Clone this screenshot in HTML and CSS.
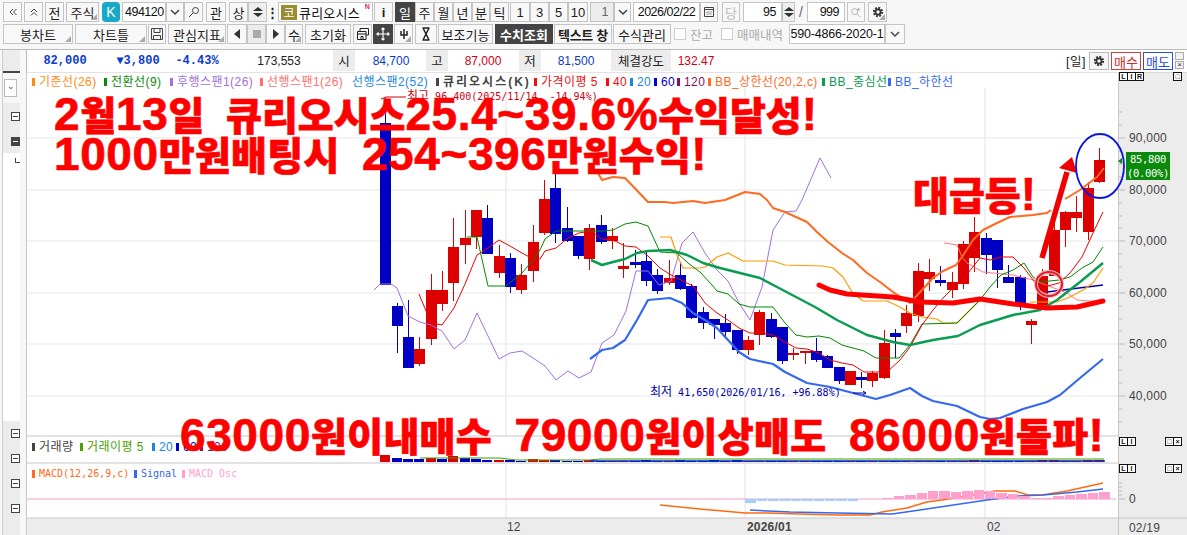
FILE: index.html
```html
<!DOCTYPE html>
<html lang="ko">
<head>
<meta charset="utf-8">
<title>큐리오시스 차트</title>
<link rel="stylesheet" href="styles.css">
</head>
<body>
<div class="top">
  <div class="row r1">
    <button class="b w19"><svg class="ic" viewBox="0 0 12 12"><path class="st thin" d="M6 3L3 6l3 3M9.500 3l-3 3 3 3"/></svg></button>
    <button class="b w19 ml2"><svg class="ic" viewBox="0 0 12 12"><path class="st thin" d="M3 6l3-3 3 3M3 9.500l3-3 3 3"/></svg></button>
    <button class="b w19 ml2">전</button>
    <button class="b w33 ml2 tri">주식</button>
    <span class="klogo">K</span>
    <span class="field w44 ml2">494120</span>
    <button class="b w18"><svg class="ic" viewBox="0 0 12 12"><path class="st" d="M2 4l4 4 4-4"/></svg></button>
    <button class="b w19"><svg class="ic" viewBox="0 0 12 12"><circle class="st thin" cx="7.500" cy="4.500" r="3"/><path class="st thin" d="M5 7l-4 4"/></svg></button>
    <button class="b w20 ml3">관</button>
    <button class="b w19 ml3">상</button>
    <button class="b w19 spin"><i class="up"></i><i class="dn"></i></button>
    <span class="dots w10">⋮</span>
    <span class="field name"><span class="olive">코</span>큐리오시스<em>N</em></span>
    <button class="b w19 ml1 strong">i</button>
    <button class="b w20 ml2 dark">일</button>
    <button class="b w19">주</button>
    <button class="b w19">월</button>
    <button class="b w19">년</button>
    <button class="b w18">분</button>
    <button class="b w19">틱</button>
    <button class="b w20 ml1">1</button>
    <button class="b w19">3</button>
    <button class="b w19">5</button>
    <button class="b w20">10</button>
    <span class="field w24 ml2 grey right">1</span>
    <button class="b w17"><svg class="ic" viewBox="0 0 12 12"><path class="st" d="M2 4l4 4 4-4"/></svg></button>
    <span class="field w67 ml2 ctr">2026/02/22</span>
    <button class="b w18"><svg class="ic" viewBox="0 0 12 12"><path class="st thin" d="M1.500 1.500h9v9h-9zM1.500 3.500h9M3.500 6h1M5.500 6h1M7.500 6h1M3.500 8h1M5.500 8h1M7.500 8h1"/></svg></button>
    <button class="b w18 ml4 off">당</button>
    <span class="field w39 ml3 right">95</span>
    <button class="b w13 spin"><i class="up"></i><i class="dn"></i></button>
    <span class="slash">/</span>
    <span class="field w38 right">999</span>
    <button class="b w18 ml2"><svg class="ic" viewBox="0 0 14 14"><circle class="st thin gr" cx="5.500" cy="6.500" r="3.500"/><path class="st thin gr" d="M8 9l4 4M10 2v4M8 4h4"/></svg></button>
    <button class="b w19 ml3 tri"><svg class="ic" viewBox="0 0 14 14"><circle class="gear" cx="7" cy="7" r="4.500"/><circle class="gearb" cx="7" cy="7" r="3"/></svg></button>
  </div>
  <div class="row r2">
    <button class="b w70 tri">봉차트</button>
    <button class="b w72 ml2 tri">차트틀</button>
    <button class="b w18 ml1"><svg class="ic big" viewBox="0 0 14 14"><path class="st thin" d="M1.500 1.500h11v11h-11zM4 1.500v4h6v-4M3.500 12.500v-4h7v4"/></svg></button>
    <button class="b w58 ml2 tri">관심지표</button>
    <button class="b w20 ml1"><i class="tl"></i></button>
    <button class="b w19 grey"><i class="sq"></i></button>
    <button class="b w19"><i class="tr"></i></button>
    <button class="b w18 tri">수</button>
    <button class="b w46 ml2">초기화</button>
    <button class="b w19 ml2"><svg class="ic big" viewBox="0 0 14 14"><path class="st thin dk" d="M4 4V1.500h8.500V8H10M1.500 4.500h8.500v8H1.500zM1.500 7h8.500M5 9.500h2v3H5z"/></svg></button>
    <button class="b w20 ml1 dark"><svg class="ic big" viewBox="0 0 14 14"><path class="st wh" d="M7 1v12M1 7h12M5.500 2.500L7 1l1.500 1.500M5.500 11.500L7 13l1.500-1.500M2.500 5.500L1 7l1.500 1.500M11.500 5.500L13 7l-1.500 1.500"/></svg></button>
    <button class="b w19 ml1 tri"><svg class="ic" viewBox="0 0 12 12"><path class="st dk" d="M6 1v10M3 3v4h6V3"/></svg></button>
    <button class="b w22 ml2"><svg class="ic big" viewBox="0 0 14 14"><path class="st dk" d="M4 1l6 12M10 1L4 13M3.500 1h7M3.500 13h7"/></svg></button>
    <button class="b w55 ml1">보조기능</button>
    <button class="b w58 ml2 dark strong">수치조회</button>
    <button class="b w58 ml1 strongish">텍스트 창</button>
    <button class="b w58 ml1">수식관리</button>
    <span class="chk ml3"></span><span class="lbl w33">잔고</span>
    <span class="chk ml2"></span><span class="lbl w52">매매내역</span>
    <span class="field w96 ctr acct">590-4866-2020-1</span>
    <button class="b w20"><svg class="ic" viewBox="0 0 12 12"><path class="st" d="M2 4l4 4 4-4"/></svg></button>
  </div>
</div>

<div class="main">
  <aside class="side">
    <div class="stab"></div>
    <div class="sbox">⌄</div>
    <div class="sgroup"><span class="pm"></span><span class="pm on"></span></div>
    <div class="swhite"><span class="ell"></span></div>
    <div class="sgroup lower"><span class="pm"></span><span class="pm"></span><span class="pm"></span><span class="pm"></span></div>
  </aside>

  <section class="chart">
    <div class="info">
      <span class="i c1 nb">82,000</span>
      <span class="i c2 nb">▼3,800</span>
      <span class="i c3 nb">-4.43%</span>
      <span class="i c4">173,553</span>
      <span class="i c5 tag">시</span>
      <span class="i c6 bl">84,700</span>
      <span class="i c5b tag">고</span>
      <span class="i c6 rd">87,000</span>
      <span class="i c5c tag">저</span>
      <span class="i c6 bl">81,500</span>
      <span class="i c7 tag">체결강도</span>
      <span class="i c8 rd">132.47</span>
      <span class="i c9">[일]</span>
      <span class="gearbtn"><svg class="ic" viewBox="0 0 14 14"><circle class="gear" cx="7" cy="7" r="4.500"/><circle class="gearb" cx="7" cy="7" r="3"/></svg></span>
      <span class="buy">매수</span>
      <span class="sell">매도</span>
      <span class="mini"><i></i><i>×</i></span>
    </div>

    <svg id="plot" class="plot" viewBox="26 72 1161 463" width="1161" height="463">
      <rect class="axisbg" x="1119" y="72" width="68" height="463"/>
      <rect class="axisbg" x="26" y="518" width="1161" height="17"/>
      <path class="grid" d="M27 138H1118M27 190H1118M27 241H1118M27 293H1118M27 344H1118M27 396H1118M506 88V436M745 88V436M985 88V436M506 464V518M745 464V518M985 464V518"/>
      <path class="sep" d="M26 72H1187M26 436H1118M26 463H1118M26 518H1187M1118.500 72V535M26.500 72V535"/>
      <path class="tick" d="M1119 112h3M1119 125h3M1119 138h6M1119 151h3M1119 164h3M1119 177h3M1119 190h6M1119 203h3M1119 216h3M1119 228h3M1119 241h6M1119 254h3M1119 267h3M1119 280h3M1119 293h6M1119 306h3M1119 319h3M1119 331h3M1119 344h6M1119 357h3M1119 370h3M1119 383h3M1119 396h6M1119 409h3M1119 422h3M1119 483h3M1119 487h3M1119 491h3M1119 495h3M1119 499h6"/>

      <g id="candles"></g>
      <g id="volume"></g>

      <polyline class="l ln-purple" points="374,290 380,284 391,284 397,288 408,316 420,322 431,325 442,331 454,349 465,340 477,313 499,359 510,353 522,351 533,358 545,366 556,380 568,371 579,378 591,372 602,343 614,335 626,311 636,271 648,271 659,285 671,281 682,243 693,232 705,253 717,270 728,281 739,303 750,320 762,287 773,230 785,212 796,211 802,200 820,158 831,178"/>
      <polyline class="l ln-pink" points="944,243 957,245 962,257 967,263 983,272 1013,275 1033,280 1067,293 1077,300 1103,302"/>
      <polyline class="l ln-dkblue" points="1047,292 1103,285"/>
      <polyline class="l ln-orange" points="660,237 671,237 677,255 683,268 700,268 705,267 717,257 728,253 743,261 773,261 785,265 823,266 833,268 843,277 852,292 863,301 887,301 900,307 910,313 922,317 937,319 943,323 957,323 977,303 983,297"/>
      <polyline class="l ln-orange" points="1030,302 1057,302 1070,297 1083,290 1093,283 1103,268"/>
      <polyline class="l ln-green" points="467,237 477,237 488,286 506,286 522,273 533,260 540,250 545,239 556,231 603,231 613,230 625,224 636,222 648,226 660,252 677,253 688,263 700,272 712,285 717,291 728,294 739,304 750,307 773,307 785,323 796,335 807,337 819,336 830,338 842,345 853,348 864,351 876,358 899,358 910,345 922,324 957,323 968,312 980,300 990,287 1001,275 1013,270 1024,263 1033,277 1040,282 1059,280 1070,277 1082,268 1093,262 1103,247"/>
      <polyline class="l ln-red" points="419,294 431,323 442,325 454,308 465,284 477,255 488,248 499,240 510,246 522,253 533,259 540,259 545,251 556,248 568,238 579,233 591,231 602,239 613,240 625,246 636,247 648,256 660,268 671,275 693,286 705,303 717,313 728,320 739,328 750,333 762,333 773,335 785,342 796,348 807,349 819,353 830,360 842,363 853,365 864,372 876,372 887,372 900,360 910,347 922,325 933,310 944,297 956,285 968,273 980,258 990,260 1001,257 1013,257 1024,268 1037,285 1048,286 1059,283 1070,273 1082,257 1093,233 1103,212"/>
      <polyline class="l ln-bbgreen" points="591,260 602,265 613,262 625,259 637,253 648,251 670,250 687,255 703,263 720,268 760,278 777,287 815,307 837,320 867,335 893,342 910,345 933,340 958,336 980,325 1013,315 1040,310 1057,300 1080,282 1103,263"/>
      <polyline class="l ln-bbup" points="598,173 602,180 613,177 625,178 648,202 665,202 673,203 693,201 705,203 725,200 745,192 760,194 767,200 773,208 785,212 807,222 817,232 828,242 842,253 853,260 867,273 880,282 893,292 910,303 922,290 933,278 943,271 956,265 962,257 973,240 983,230 997,223 1010,217 1033,215 1047,213 1051,210"/>
      <polyline class="l ln-bbup" points="1065,199 1080,190 1097,177 1104,168"/>
      <polyline class="l ln-bbdn" points="590,359 602,350 613,348 625,340 637,320 648,300 670,298 682,303 693,313 705,320 717,328 728,340 739,352 750,359 773,364 785,372 807,383 830,387 853,393 876,399 890,395 910,388 922,396 933,401 957,406 980,417 990,419 1000,418 1023,409 1047,402 1060,395 1080,378 1103,359"/>

      <path class="l1 ln-volgreen" d="M420 458H500L516 460H590L600 459H1104"/>
      <path class="l1 ln-volblue" d="M590 461H1105"/>
      <path class="zero" d="M27 499H1116"/>
      <polyline class="l ln-macd" points="660,505 700,509 723,511 745,513 767,513 800,514 837,515 870,515 882,512 907,508 927,502 942,500 995,491 1015,491 1028,495 1042,495 1067,491 1103,483"/>
      <polyline class="l ln-signal" points="750,510 768,511 790,512 837,513 892,514 913,511 940,507 987,500 1018,496 1043,495 1077,492 1103,489"/>
      <g id="hist"></g>

      <text class="ax" x="1129" y="142">90,000</text>
      <text class="ax" x="1129" y="194">80,000</text>
      <text class="ax" x="1129" y="245">70,000</text>
      <text class="ax" x="1129" y="297">60,000</text>
      <text class="ax" x="1129" y="348">50,000</text>
      <text class="ax" x="1129" y="400">40,000</text>
      <text class="ax" x="1129" y="503">0</text>
      <text class="ax" x="507" y="531">12</text>
      <text class="ax strongt" x="747" y="531">2026/01</text>
      <text class="ax" x="987" y="531">02</text>
      <text class="ax" x="1129" y="532">02/19</text>
      <text class="note red" x="407" y="100"><tspan class="ko">최고</tspan> 96,400(2025/11/14, -14.94%)</text>
      <path class="notearrow red" d="M381 99L386 97H406"/>
      <text class="note navy" x="650" y="396"><tspan class="ko">최저</tspan> 41,650(2026/01/16, +96.88%)</text>
      <path class="notearrow navy" d="M853 393H866M863 391l3 2-3 2"/>

      <path class="hand" d="M819 285L830 290 847 294 893 297 920 302 953 303 980 299 1013 304 1047 308 1077 307 1103 301"/>
      <path class="arrow" d="M1042 258L1067 172"/>
      <path class="arrowhead" d="M1072 157L1059 168 1077 173Z"/>
      <ellipse class="ring-blue" cx="1100" cy="166" rx="24" ry="32"/>
      <ellipse class="ring-halo" cx="1049" cy="284" rx="13" ry="12"/>
      <ellipse class="ring-red" cx="1049" cy="284" rx="13" ry="12"/>
      <path class="pt" d="M1118 161l4-3v6z"/>
    </svg>

    <div class="legend lg-main">
      <span class="o">기준선(26)</span><span class="g">전환선(9)</span><span class="p">후행스팬1(26)</span><span class="k">선행스팬1(26)</span><span class="s nomark">선행스팬2(52)</span><span class="d">큐리오시스(K)</span><span class="r">가격이평 5</span><span class="r">40</span><span class="s">20</span><span class="n">60</span><span class="m">120</span><span class="o2">BB_상한선(20,2,c)</span><span class="g2">BB_중심선</span><span class="b2">BB_하한선</span>
    </div>
    <div class="legend lg-vol">
      <span class="d">거래량</span><span class="v">거래이평 5</span><span class="s">20</span><span class="n">60</span><span class="m">120</span>
    </div>
    <div class="legend lg-macd">
      <span class="o2">MACD(12,26,9,c)</span><span class="b2">Signal</span><span class="osc">MACD Osc</span>
    </div>

    <div class="lir a1"><i>L</i><i>I</i><i>R</i></div>
    <div class="lir a2"><i>□</i></div>
    <div class="lir a3"><i>L</i><i>I</i></div>
    <div class="lir a4"><i>□</i><i>×</i></div>
    <div class="lir a5"><i>L</i><i>I</i></div>
    <div class="lir a6"><i>□</i><i>×</i></div>

    <div class="price">85,800<br>(0.00%)</div>
    <div class="bigt t1"><span class="dg">2</span>월<span class="dg">13</span>일  큐리오시스<span class="dg">25.4~39.6%</span>수익달성<span class="dg">!</span></div>
    <div class="bigt t2"><span class="dg">1000</span>만원배팅시  <span class="dg">254~396</span>만원수익<span class="dg">!</span></div>
    <div class="bigt t3">대급등<span class="dg">!</span></div>
    <div class="bigt t4"><span class="dg">63000</span>원이내매수  <span class="dg">79000</span>원이상매도  <span class="dg">86000</span>원돌파<span class="dg">!</span></div>
  </section>
</div>
<script src="script.js"></script>
</body>
</html>
```

FILE: styles.css
```css
*{box-sizing:border-box}
html,body{margin:0;padding:0;width:1187px;height:535px;overflow:hidden}
body{background:#f7f7f7;font:13px "Liberation Sans","Noto Sans CJK KR",sans-serif;color:#222}
.top{height:50px;border-bottom:1px solid #bbb;background:#f7f7f7;padding:2px 0 0 3px}
.row{display:flex;align-items:stretch;height:20px}
.r2{margin-top:2px;height:20px}
.b{display:flex;align-items:center;justify-content:center;padding:0;margin:0;border:1px solid #c4c4c4;background:#f8f8f8;font:13px "Liberation Sans","Noto Sans CJK KR",sans-serif;color:#222;position:relative;flex:none;white-space:nowrap;overflow:hidden}
.tri::after{content:"";position:absolute;right:1px;bottom:1px;border-style:solid;border-width:0 0 6px 6px;border-color:transparent transparent #aaa transparent}
.dark{background:#444;border-color:#444;color:#fff}
.strong{font-weight:700}
.strongish{font-weight:700;letter-spacing:-.3px}
.off{color:#bbb}
.grey{background:#ececec}
.w10{width:10px}.w13{width:13px}.w17{width:17px}.w18{width:18px}.w19{width:19px}.w20{width:20px}.w22{width:22px}.w24{width:24px}.w33{width:33px}.w38{width:38px}.w39{width:39px}.w44{width:44px}.w46{width:46px}.w52{width:52px}.w55{width:55px}.w58{width:58px}.w67{width:67px}.w70{width:70px}.w72{width:72px}.w96{width:96px}
.ml1{margin-left:1px}.ml2{margin-left:2px}.ml3{margin-left:3px}.ml4{margin-left:4px}
.field{display:flex;align-items:center;background:#fff;border:1px solid #c4c4c4;padding:0 2px;font-size:12.500px;color:#111;flex:none;letter-spacing:-.5px;white-space:nowrap;position:relative}
.right{justify-content:flex-end;padding-right:5px}
.ctr{justify-content:center}
.field.grey{background:#ececec;color:#666}
.klogo{width:18px;margin-left:3px;background:#18a8c8;border-radius:4px;color:#fff;display:flex;align-items:center;justify-content:center;font-size:14px;flex:none}
.ic{width:12px;height:12px;display:block}
.ic.big{width:14px;height:14px}
.st{fill:none;stroke:#444;stroke-width:1.500}
.thin{stroke-width:1}
.gr{stroke:#aaa}
.dk{stroke:#222}
.wh{stroke:#fff;stroke-width:1.200}
.gear{fill:none;stroke:#333;stroke-width:3;stroke-dasharray:2 1.500}
.gearb{fill:none;stroke:#333;stroke-width:2}
.spin{flex-direction:column;gap:2px;background:#eee}
.up,.dn{display:block;width:0;height:0;border-left:5px solid transparent;border-right:5px solid transparent}
.up{border-bottom:4px solid #333}
.dn{border-top:4px solid #333}
.dots{display:flex;align-items:center;justify-content:center;font-weight:700;flex:none;margin-left:0}
.name{width:95px;margin-left:1px;padding-left:2px;gap:2px;font-size:13px;letter-spacing:.2px}
.olive{display:inline-flex;width:16px;height:15px;align-items:center;justify-content:center;background:#9a8a30;color:#fff;font-size:12px}
.name em{position:absolute;right:2px;top:0;color:#e0206a;font:700 7px "Liberation Sans",sans-serif}
.slash{width:12px;display:flex;align-items:center;justify-content:center;color:#666;flex:none;font-size:14px}
.tl,.tr,.sq{display:block}
.tl{border-top:5px solid transparent;border-bottom:5px solid transparent;border-right:6px solid #333}
.tr{border-top:5px solid transparent;border-bottom:5px solid transparent;border-left:6px solid #333}
.sq{width:8px;height:8px;background:#aaa}
.chk{width:12px;height:12px;align-self:center;background:#fff;border:1px solid #ccc;flex:none}
.lbl{display:flex;align-items:center;padding-left:4px;color:#aaa;font-size:12.500px;flex:none;white-space:nowrap}
.lbl.w52{width:56px}
.acct{letter-spacing:-.2px}

.main{display:flex;height:485px}
.side{flex:none;background:#f7f7f7;border-left:1px solid #ccc;margin-left:2px;width:24px;display:flex;flex-direction:column}
.stab{height:23px;background:#ececec;width:17px;border-bottom:2px solid #444}
.sbox{width:13px;height:18px;margin:6px 0 6px 1px;border:1px solid #bbb;background:#fff;font-size:9px;text-align:center;line-height:12px;color:#555}
.sgroup{width:17px;height:51px;background:#ececec;display:flex;flex-direction:column;align-items:flex-end;padding-top:9px;gap:16px}
.pm{display:block;border:1px solid #444;background:#fff;flex:none;width:9px;height:9px;position:relative}
.pm::after{content:"";position:absolute;left:1px;top:3px;width:5px;height:1px;background:#444}
.pm.on{background:#444}
.pm.on::after{background:#fff}
.swhite{width:17px;background:#fff;height:270px;position:relative}
.ell{position:absolute;right:0;top:5px;width:5px;height:5px;border-left:1px solid #444;border-bottom:1px solid #444}
.sgroup.lower{height:115px;gap:16px;padding-top:8px}
.chart{position:relative;flex:1;background:#fff}
.info{height:22px;position:relative;background:#fff;display:flex;align-items:center;font-size:12.500px;color:#222;border-left:1px solid #bbb}
.plot{position:absolute;left:0;top:22px;display:block;background:#fff}
.i{position:absolute;top:0;height:21px;display:flex;align-items:center;justify-content:center;white-space:nowrap}
.nb{font:700 12px "Liberation Mono",monospace;color:#0a3ccc}
.tag{background:#ececec}
.bl{color:#0a3ccc;font-size:12px}
.rd{color:#d00010;font-size:12px}
.c1{left:16px;width:44px}
.c2{left:87px;width:48px}
.c3{left:148px;width:44px}
.c4{left:230px;width:44px;font-size:12px}
.c5{left:306px;width:22px}
.c5b{left:399px;width:22px}
.c5c{left:492px;width:22px}
.c7{left:584px;width:60px}
.c8{left:651px;width:36px}
.c9{left:1038px;width:22px;letter-spacing:.5px}
.c6{width:36px}
.info>.c6:nth-of-type(6){left:346px}
.info>.c6:nth-of-type(8){left:438px}
.info>.c6:nth-of-type(10){left:531px}
.gearbtn{position:absolute;left:1062px;top:2px;width:20px;height:18px;border:1px solid #bbb;background:#f5f5f5;display:flex;align-items:center;justify-content:center}
.buy,.sell{position:absolute;top:2px;width:30px;height:18px;background:#fff;display:flex;align-items:center;justify-content:center;font-size:13px}
.buy{left:1084px;border:1px solid #d04040;color:#c83030}
.sell{left:1116px;border:1px solid #2a50d8;color:#2a50d8}
.mini{position:absolute;left:1148px;top:2px;width:10px;display:flex;flex-direction:column}
.mini i{display:block;width:9px;height:8px;border:1px solid #aaa;margin-bottom:1px;font:normal 8px/6px "Liberation Sans",sans-serif;text-align:center;background:#f3f3f3}

.grid{fill:none;stroke:#e8e8e8;stroke-width:1.200}
.sep{fill:none;stroke:#c8c8c8;stroke-width:1}
.tick{fill:none;stroke:#bbb;stroke-width:1}
.axisbg{fill:#ececec}
.l{fill:none;stroke-linejoin:round;stroke-width:1}
.l1{fill:none;stroke-width:1}
.ln-purple{stroke:#a070e0}
.ln-pink{stroke:#ff7878}
.ln-dkblue{stroke:#0000b0;stroke-width:1.300}
.ln-orange{stroke:#ff9a00;stroke-width:1.200}
.ln-green{stroke:#008a00}
.ln-red{stroke:#f00000}
.ln-bbgreen{stroke:#0a9c50;stroke-width:2.500}
.ln-bbup{stroke:#ff6a20;stroke-width:2}
.ln-bbdn{stroke:#3468f0;stroke-width:2.200}
.ln-volgreen{stroke:#3ea000}
.ln-volblue{stroke:#0030c0;stroke-width:1.500}
.zero{fill:none;stroke:#f0a0c8;stroke-width:1}
.ln-macd{stroke:#ff6a10;stroke-width:1.500}
.ln-signal{stroke:#3468f0;stroke-width:1.500}
.up-c{fill:#dc0000;stroke:none}
.dn-c{fill:#0000c4;stroke:none}
.vol-hist-up{fill:#ff9fce}
.vol-hist-dn{fill:#a0d0ff}
.ax{font:12px "Liberation Sans",sans-serif;fill:#444;letter-spacing:.2px}
.strongt{font-weight:700}
.note{font:10px "DejaVu Sans Mono",monospace}
.note .ko{font:12px "Noto Sans CJK KR",sans-serif}
.note.red{fill:#d00010}
.note.navy{fill:#0000a0}
.notearrow{fill:none;stroke-width:1}
.notearrow.red{stroke:#d00010}
.notearrow.navy{stroke:#0000a0}
.hand{fill:none;stroke:#ff0000;stroke-width:5;stroke-linecap:round;stroke-linejoin:round}
.arrow{fill:none;stroke:#f00000;stroke-width:5.500}
.arrowhead{fill:#f00000}
.ring-blue{fill:none;stroke:#0a14e0;stroke-width:1.800}
.ring-halo{fill:none;stroke:#ffb4b4;stroke-width:4}
.ring-red{fill:none;stroke:#d82030;stroke-width:2}
.pt{fill:#0a8a0a}

.legend{position:absolute;left:6px;display:grid;font:12px "Liberation Sans","Noto Sans CJK KR",sans-serif;white-space:nowrap;line-height:16px}
.legend span{display:block;padding-left:7px;position:relative;letter-spacing:.45px}
.legend span::before{content:"";position:absolute;left:0;top:4px;width:3px;height:8px;background:currentColor}
.legend span.nomark{padding-left:0}
.legend span.nomark::before{display:none}
.lg-main{top:24px;grid-template-columns:72px 66px 90px 92px 84px 98px 72px 24px 24px 23px 31px 114px 66px 66px}
.lg-vol{top:389px;grid-template-columns:48px 72px 24px 24px 30px}
.lg-macd{top:416px;grid-template-columns:102px 48px 60px}
.o{color:#ff8c10}.g{color:#0a8a0a}.p{color:#a070e0}.k{color:#ff7070}.s{color:#1a88dd}.d{color:#444}.r{color:#f01010}.n{color:#0000c8}.m{color:#801060}.o2{color:#ff6a20}.g2{color:#0a9c50}.b2{color:#3468f0}.v{color:#4aa000}.osc{color:#ff9fce}
.lg-main span.d{font-weight:700;letter-spacing:2px}
.lg-macd span{letter-spacing:0;font-family:"DejaVu Sans Mono",monospace;font-size:10px}
.lir{position:absolute;display:flex}
.lir i{display:block;width:9px;height:9px;border:1px solid #111;margin-left:-1px;font:700 7px/7px "Liberation Sans",sans-serif;text-align:center;background:#fff;color:#111}
.a1{left:1094px;top:22px}
.a2{left:1148px;top:22px}
.a3{left:1094px;top:387px}
.a4{left:1140px;top:387px}
.a5{left:1094px;top:414px}
.a6{left:1140px;top:414px}
.price{position:absolute;left:1100px;top:102px;width:44px;height:28px;background:#0a8a0a;color:#fff;font:10.500px/14px "DejaVu Sans Mono",monospace;text-align:center;letter-spacing:-.3px}
.bigt{position:absolute;color:#ff0000;font:900 39px/46px "Liberation Sans","Noto Sans CJK KR",sans-serif;white-space:pre;-webkit-text-stroke:.7px #ff0000}
.dg{font-size:46px;font-weight:700;letter-spacing:.6px}
.t1{left:28px;top:41px}
.t2{left:28px;top:81px;letter-spacing:.3px}
.t3{left:887px;top:121px}
.t4{left:154px;top:362px;letter-spacing:.35px}
```

FILE: script.js
```js
// [body colour, wick top, body top, body bottom, wick bottom]
var c=[[0,98,123,285,285],[0,303,306,326,353],[0,300,337,368,368],[1,337,349,364,366],[1,274,290,339,345],[1,271,290,304,311],[1,218,247,283,301],[1,210,238,245,264],[1,210,210,237,249],[0,205,218,254,254],[1,245,256,273,278],[0,253,258,287,293],[1,264,275,290,294],[1,225,242,271,282],[1,180,199,233,235],[0,173,188,234,243],[0,207,228,241,242],[0,236,236,256,259],[1,224,228,259,270],[0,215,225,242,244],[1,228,236,241,249],[1,243,266,269,278],[0,250,262,265,268],[0,252,261,281,286],[0,269,275,291,294],[1,260,278,283,285],[0,262,275,289,290],[0,284,286,318,319],[0,307,312,323,329],[0,319,319,325,339],[0,314,323,332,337],[0,330,330,350,354],[1,336,340,350,355],[1,310,312,335,345],[0,313,319,337,338],[0,327,327,361,364],[1,348,353,355,360],[1,351,351,353,364],[0,338,351,360,362],[0,355,356,368,368],[0,367,367,381,384],[1,371,371,385,385],[0,372,377,380,388],[1,371,373,381,387],[1,330,343,378,379],[0,329,333,337,358],[1,305,313,326,333],[1,263,271,316,322],[1,259,272,279,291],[0,266,280,283,286],[1,272,282,290,298],[1,241,244,284,289],[1,217,232,258,272],[0,233,238,255,274],[0,240,240,270,288],[0,265,277,283,283],[0,275,277,303,310],[1,319,321,325,344],[1,269,276,305,305],[1,222,230,276,276],[1,211,212,230,247],[1,196,212,218,232],[1,182,188,232,240],[1,148,160,182,183]];
var vh=[7,4,3,3,4,3,6,4,3,2,2,2,1,3,2,2,1,1,2,1,1,1,1,2,1,1,2,1,1,2,1,2,1,1,1,1,1,1,1,1,1,1,1,1,1,1,1,1,1,1,1,1,2,1,1,1,1,1,2,2,1,1,2,2];
var vc=[1,0,0,0,1,0,1,0,0,0,1,0,0,1,1,0,0,0,1,0,1,1,0,0,0,1,0,0,0,0,0,0,1,1,0,0,1,1,0,0,0,1,0,1,1,0,1,1,1,0,1,1,1,0,0,0,0,1,1,1,1,1,1,1];
var osc=[[745,756,503,0],[757,767,501,0],[768,779,501,0],[780,790,501,0],[791,801,501,0],[802,813,501,0],[814,824,501,0],[825,835,501,0],[836,847,501,0],[848,858,501,0],[882,893,498,1],[894,904,496,1],[905,916,495,1],[917,927,493,1],[928,938,491,1],[939,950,491,1],[951,961,492,1],[962,973,491,1],[974,984,490,1],[985,995,491,1],[996,1007,493,1],[1008,1018,494,1],[1019,1030,496,1],[1031,1041,498,1],[1042,1052,498,1],[1053,1064,496,1],[1065,1075,495,1],[1076,1087,494,1],[1088,1098,493,1],[1099,1110,492,1]];
var NS="http://www.w3.org/2000/svg";
function rect(g,x,y,w,h,cl){var r=document.createElementNS(NS,"rect");r.setAttribute("x",x);r.setAttribute("y",y);r.setAttribute("width",w);r.setAttribute("height",Math.max(h,1));r.setAttribute("class",cl);r.setAttribute("shape-rendering","crispEdges");g.appendChild(r);}
var cg=document.getElementById("candles"),vg=document.getElementById("volume"),hg=document.getElementById("hist");
c.forEach(function(d,i){
  var x=Math.round(385.3+11.33*i),cl=d[0]?"up-c":"dn-c";
  rect(cg,x,d[1],1,d[4]-d[1],cl);
  rect(cg,x-5,d[2],11,d[3]-d[2],cl);
  rect(vg,x-5,462-vh[i],10,vh[i],vc[i]?"up-c":"dn-c");
});
osc.forEach(function(o){
  var up=o[3];
  rect(hg,o[0],up?o[2]:499,o[1]-o[0],up?499-o[2]:o[2]-499,up?"vol-hist-up":"vol-hist-dn");
});
```
